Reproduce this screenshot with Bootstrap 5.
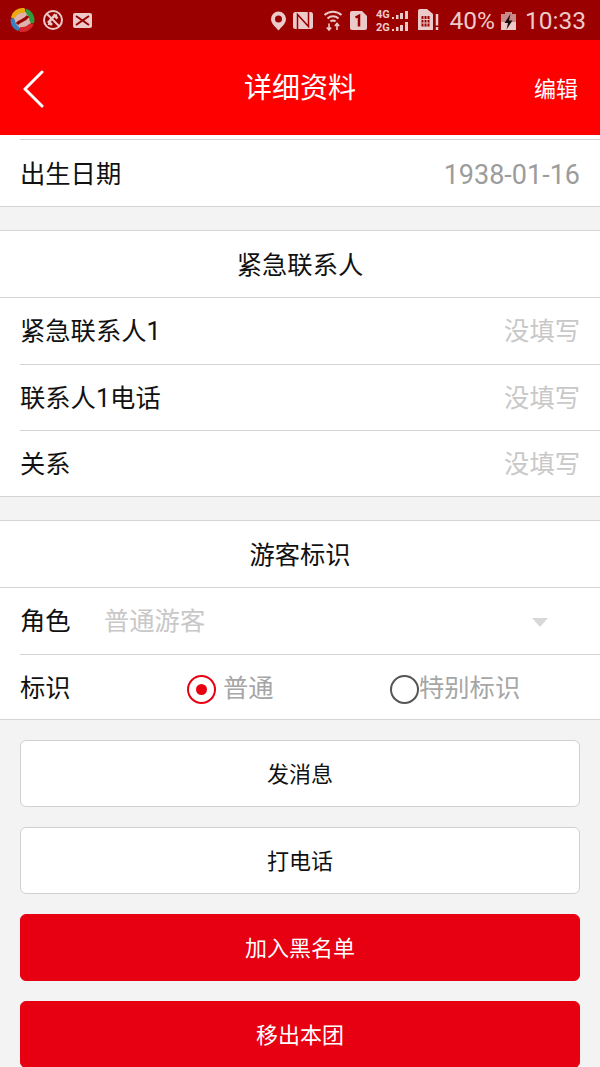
<!DOCTYPE html>
<html lang="zh">
<head>
<meta charset="UTF-8">
<meta name="viewport" content="width=device-width, initial-scale=1.0">
<title>详细资料</title>
<link rel="stylesheet" href="https://cdn.jsdelivr.net/npm/bootstrap@5.3.0/dist/css/bootstrap.min.css">
<style>
html, body { height: 1067px; overflow: hidden; }
body { background: #f3f3f3; font-family: Roboto, "Noto Sans CJK SC", sans-serif; color: #111; }
.status-bar { height: 40px; background: #9b0000; color: #eccaca; }
.status-right { padding-right: 14px; }
.status-text { font-size: 24.5px; line-height: 42px; }
.status-pct { margin-left: 11px; margin-right: 6px; }
.status-batt { margin-right: 9px; }
.app-bar { height: 95px; background: #ff0000; color: #fff; }
.app-title { font-size: 28px; line-height: 1; left: 0; right: 0; top: 35px; }
.app-edit { font-size: 22px; right: 22px; top: 39px; line-height: 1; }
.app-back { left: 22px; top: 30px; }
.sheet { background: #fff; }
.sheet-edge { border-top: 1px solid #d4d4d4; border-bottom: 1px solid #d4d4d4; }
.sheet-top { height: 4px; }
.info-row { height: 66px; margin-left: 20px; padding-right: 20px; padding-top: 2px; font-size: 25.3px; line-height: 1; }
.info-row + .info-row, .sheet-top + .info-row { border-top: 1px solid #d4d4d4; }
.sheet-top + .info-row { height: 67px; padding-top: 4px; }
.info-row-short { height: 65px; padding-top: 4px; }
.sec-head { height: 67px; padding-top: 3px; font-size: 25.3px; border-bottom: 1px solid #d4d4d4; }
.gap-band { height: 23px; }
.val-date { color: #9c9c9c; font-size: 27px; }
.val-empty { color: #c8c8c8; }
.role-label { width: 84px; }
.role-value { color: #c8c8c8; }
.role-caret { width: 0; height: 0; border-left: 8px solid transparent; border-right: 8px solid transparent; border-top: 9px solid #d8d8d8; margin-right: 32px; }
.mark-label { width: 167px; }
.radio-on, .radio-off { width: 29px; height: 29px; border-radius: 50%; background: #fff; flex: none; }
.radio-on { border: 2px solid #e60012; }
.radio-on::after { content: ""; width: 11px; height: 11px; border-radius: 50%; background: #e60012; }
.radio-off { border: 2px solid #555; }
.radio-text { color: #a6a6a6; }
.opt-plain { width: 203px; gap: 7px; }
.btn-stack { padding: 20px 20px 0; gap: 20px; }
.act-btn { height: 67px; border-radius: 6px; font-size: 22px; padding-top: 8px; }
.act-white { background: #fff; border: 1px solid #d0d0d0; color: #111; }
.act-red { background: #e60012; border: 1px solid #e60012; color: #fff; }
</style>
</head>
<body>

<!-- Status bar -->
<div class="status-bar d-flex justify-content-between">
    <svg width="92" height="40" viewBox="0 0 92 40">
        <!-- app logo -->
        <circle cx="22.500" cy="20" r="9" fill="#dcb4ac"/>
        <path d="M11 17 A12 12 0 0 1 24 8.100 C26 9 25.500 12.500 23.500 13 C20 12.800 17 14 15.500 17 C14 19 12 18.500 11 17 Z" fill="#eba90f"/>
        <path d="M26.500 8.700 A12 12 0 0 1 34.500 20.500 C34.500 23.500 33 24 31 23 C29 21.500 29.500 18 28 15.500 C26 13.500 24.500 10.500 26.500 8.700 Z" fill="#2f9b3a"/>
        <path d="M33.500 25 A12 12 0 0 1 20 31.800 C17.500 30.500 18.500 27.500 21 27 C24.500 27.500 27 26 29 24 C30.500 22.800 33 23.500 33.500 25 Z" fill="#d8262c"/>
        <path d="M17.500 30.800 A12 12 0 0 1 10.500 19.500 C11.500 17.500 14 18 14.800 20 C15 22.500 16.500 25 18.500 26.500 C20 28 19.500 30.800 17.500 30.800 Z" fill="#3a7fc0"/>
        <path d="M17 24 C20 20 25 21 28 16" fill="none" stroke="#9b0000" stroke-width="3"/>
        <!-- call blocked -->
        <g fill="none" stroke="#eccaca" transform="translate(53 20)">
            <circle r="9" stroke-width="2"/>
            <path d="M-6.500 -6.500 L6.500 6.500" stroke-width="2"/>
            <path d="M-4 5 C-3.500 0 -0.500 -3.500 4 -5 M0.500 -5.500 L4.500 -1.500 M-5 1 L-1 5" stroke-width="2.500"/>
        </g>
        <!-- mail -->
        <rect x="73" y="13" width="19" height="15" rx="2" fill="#eccaca"/>
        <path d="M76 16 L82.500 20.500 L89 16 M76 25 L82.500 20.500 L89 25" fill="none" stroke="#9b0000" stroke-width="2"/>
    </svg>
    <div class="status-right d-flex">
        <svg width="168" height="40" viewBox="271 0 168 40">
            <!-- location -->
            <path d="M278.500 11.500 A7.500 7.500 0 0 1 286 19 C286 23.500 281.500 27 278.500 30.500 C275.500 27 271 23.500 271 19 A7.500 7.500 0 0 1 278.500 11.500 Z M278.500 15.500 A3.500 3.500 0 1 0 278.500 22.500 A3.500 3.500 0 1 0 278.500 15.500 Z" fill="#eccaca" fill-rule="evenodd"/>
            <!-- nfc -->
            <rect x="293" y="12" width="20" height="17" rx="2.500" fill="#eccaca"/>
            <path d="M297.500 29 V14.500 L308.500 26.500 V12" fill="none" stroke="#9b0000" stroke-width="1.500"/>
            <!-- wifi -->
            <g fill="none" stroke="#eccaca" stroke-width="2">
                <path d="M324.500 15 A12.500 12.500 0 0 1 341.500 15"/>
                <path d="M327.500 18.500 A8 8 0 0 1 338.500 18.500"/>
                <path d="M330.500 21.500 A3.500 3.500 0 0 1 335.500 21.500"/>
            </g>
            <path d="M329 23.500 V30 M326.800 27.500 L329 30 L331.200 27.500 M337 30 V23.500 M334.800 26 L337 23.500 L339.200 26" fill="none" stroke="#eccaca" stroke-width="1.600"/>
            <!-- sim 1 -->
            <path d="M352 11 H362 L367 16 V28 A2 2 0 0 1 365 30 H352 A2 2 0 0 1 350 28 V13 A2 2 0 0 1 352 11 Z" fill="#eccaca"/>
            <path d="M355.500 17.500 L359 15.800 V26.500" stroke="#9b0000" stroke-width="2.500" fill="none"/>
            <!-- 4G 2G signal -->
            <text x="376" y="18" font-family="Roboto" font-size="11" font-weight="700" fill="#eccaca">4G</text>
            <text x="376" y="31" font-family="Roboto" font-size="11" font-weight="700" fill="#eccaca">2G</text>
            <g fill="#eccaca">
                <rect x="392" y="17" width="2" height="2"/><rect x="396" y="15" width="2.500" height="4"/><rect x="400" y="13" width="3" height="6"/><rect x="405" y="11" width="3" height="8"/>
                <rect x="392" y="29" width="2" height="2"/><rect x="396" y="27" width="2.500" height="4"/><rect x="400" y="25" width="3" height="6"/><rect x="405" y="22" width="3" height="9"/>
            </g>
            <!-- sim warning -->
            <path d="M420 9 H427 L433 14 V30 H418 V11 A2 2 0 0 1 420 9 Z" fill="#eccaca"/>
            <rect x="421.500" y="16" width="8" height="10.500" fill="#9b0000"/>
            <path d="M424 16 V26.500 M427 16 V26.500 M421.500 19.500 H429.500 M421.500 23 H429.500" stroke="#eccaca" stroke-width="1"/>
            <path d="M437 14 V25.500 M437 27 V30" stroke="#eccaca" stroke-width="2.500"/>
        </svg>
        <span class="status-text status-pct">40%</span>
        <svg width="15" height="40" viewBox="0 0 15 40" class="status-batt">
            <path d="M4 12 H11 V14 H15 V30 H0 V14 H4 Z" fill="#c98a8a"/>
            <path d="M0 22 H15 V30 H0 Z" fill="#eccaca"/>
            <path d="M9.500 14 L3.500 23 H7 L5.500 29.500 L11.500 20.500 H8 Z" fill="#1c0a0a"/>
        </svg>
        <span class="status-text">10:33</span>
    </div>
</div>

<!-- Title bar -->
<div class="app-bar position-relative">
    <svg class="app-back position-absolute" width="24" height="38" viewBox="0 0 24 38"><path d="M20 2 L3 19 L20 36" fill="none" stroke="#fff" stroke-width="3" stroke-linecap="round" stroke-linejoin="round"/></svg>
    <div class="app-title position-absolute text-center">详细资料</div>
    <div class="app-edit position-absolute">编辑</div>
</div>

<!-- Birth date -->
<div class="sheet sheet-edge border-top-0">
    <div class="sheet-top"></div>
    <div class="info-row d-flex align-items-center justify-content-between">
        <span>出生日期</span>
        <span class="val-date">1938-01-16</span>
    </div>
</div>
<div class="gap-band"></div>

<!-- Emergency contact -->
<div class="sheet sheet-edge">
    <div class="sec-head d-flex align-items-center justify-content-center">紧急联系人</div>
    <div class="info-row d-flex align-items-center justify-content-between">
        <span>紧急联系人1</span>
        <span class="val-empty">没填写</span>
    </div>
    <div class="info-row d-flex align-items-center justify-content-between">
        <span>联系人1电话</span>
        <span class="val-empty">没填写</span>
    </div>
    <div class="info-row d-flex align-items-center justify-content-between">
        <span>关系</span>
        <span class="val-empty">没填写</span>
    </div>
</div>
<div class="gap-band"></div>

<!-- Visitor mark -->
<div class="sheet sheet-edge">
    <div class="sec-head d-flex align-items-center justify-content-center">游客标识</div>
    <div class="info-row d-flex align-items-center">
        <span class="role-label">角色</span>
        <span class="role-value flex-grow-1">普通游客</span>
        <span class="role-caret"></span>
    </div>
    <div class="info-row info-row-short d-flex align-items-center">
        <span class="mark-label">标识</span>
        <div class="opt-plain d-flex align-items-center">
            <span class="radio-on d-flex align-items-center justify-content-center"></span>
            <span class="radio-text">普通</span>
        </div>
        <div class="d-flex align-items-center">
            <span class="radio-off"></span>
            <span class="radio-text">特别标识</span>
        </div>
    </div>
</div>

<!-- Actions -->
<div class="btn-stack d-flex flex-column">
    <button type="button" class="btn act-btn act-white">发消息</button>
    <button type="button" class="btn act-btn act-white">打电话</button>
    <button type="button" class="btn act-btn act-red">加入黑名单</button>
    <button type="button" class="btn act-btn act-red">移出本团</button>
</div>

<script src="https://cdn.jsdelivr.net/npm/bootstrap@5.3.0/dist/js/bootstrap.bundle.min.js"></script>
</body>
</html>
